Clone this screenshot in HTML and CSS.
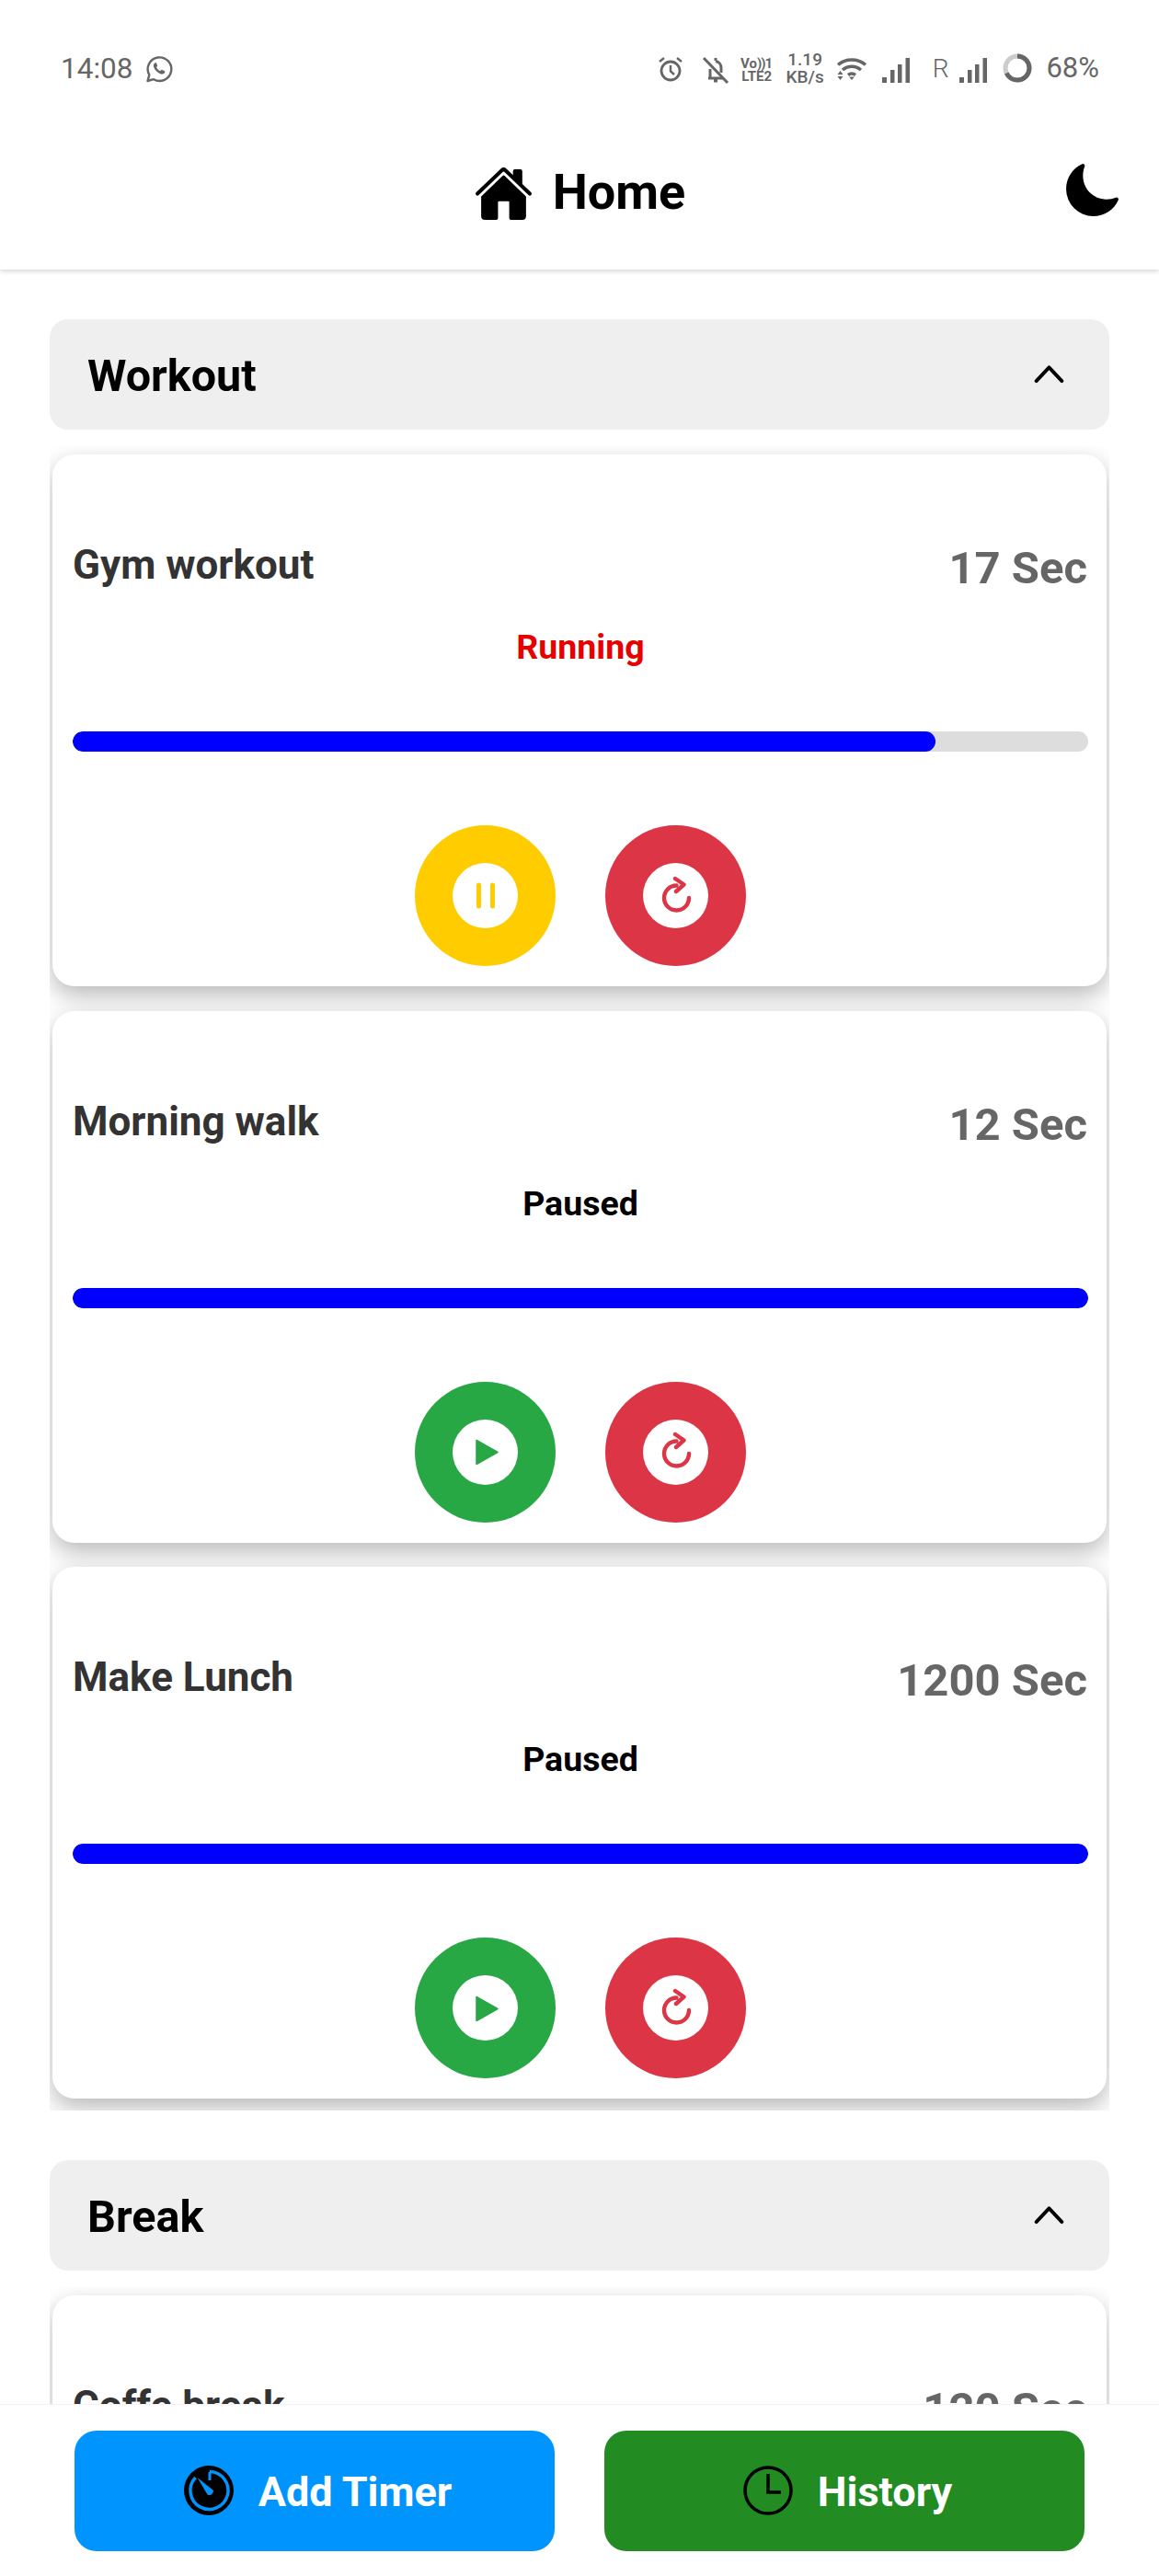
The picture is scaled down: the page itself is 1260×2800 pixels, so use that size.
FILE: index.html
```html
<!DOCTYPE html>
<html lang="en">

<head>
    <meta charset="UTF-8">
    <meta name="viewport" content="width=device-width, initial-scale=1.0">
    <title>Home</title>
    <link rel="stylesheet" href="styles.css">
</head>

<body>
    <svg class="defs" width="0" height="0">
        <symbol id="reload" viewBox="0 0 44 44">
            <path d="M36 24A13.5 13.5 0 1 1 22.5 10.5M21 3l9.5 6.5L22 17" fill="none" stroke="#dc3545" stroke-width="4.4" stroke-linecap="round" stroke-linejoin="round" />
        </symbol>
        <symbol id="chevron" viewBox="0 0 34 22">
            <path d="M2.5 19L17 3.5 31.5 19" fill="none" stroke="#000" stroke-width="4" stroke-linecap="round" stroke-linejoin="round" />
        </symbol>
        <symbol id="bars" viewBox="0 0 30 27">
            <rect x="0" y="21" width="5" height="6" />
            <rect x="9" y="13" width="4.5" height="14" />
            <rect x="17" y="7" width="4.5" height="20" />
            <rect x="25.500" y="0" width="4.5" height="27" />
        </symbol>
    </svg>

    <header class="top">
        <div class="status">
            <div class="status-left">
                <span class="clock">14:08</span>
                <svg class="wa" viewBox="0 0 30 30">
                    <path d="M2.5 28l1.8-6.6A12.8 12.8 0 1 1 9 26.2z" fill="none" stroke="#666" stroke-width="2.4" stroke-linejoin="round" />
                    <path d="M10.8 8.2c-1.6.8-2.3 2.6-1.7 4.6 1 3.3 4 6.3 7.6 7.6 2 .6 3.9-.3 4.5-2 .2-.6-.1-1-.6-1.300l-2.300-1.200c-.5-.2-.9-.1-1.200.3l-.9 1.100c-2-.9-3.300-2.200-4.200-4.200l.8-.9c.3-.4.4-.7.2-1.200l-1-2.400c-.2-.6-.7-.7-1.200-.4z" fill="#666" />
                </svg>
            </div>
            <div class="status-right">
                <svg class="ic-alarm" viewBox="0 0 28 28">
                    <circle cx="14" cy="16" r="10" fill="none" stroke="#666" stroke-width="2.800" />
                    <path d="M14 10v6.500l4 3.500M2 6l5-4M26 6l-5-4" fill="none" stroke="#666" stroke-width="2.400" />
                </svg>
                <svg class="ic-bell" viewBox="0 0 30 30">
                    <path d="M7 24h16M9 23v-9M21 18v-5c0-4-2.500-7-6-7.500M13 27h4M15 5V2" fill="none" stroke="#666" stroke-width="3" />
                    <path d="M2 2l26 27" stroke="#666" stroke-width="3" />
                </svg>
                <div class="net">
                    <span>Vo<i>))</i>1</span>
                    <span>LTE2</span>
                </div>
                <div class="speed">
                    <span>1.19</span>
                    <span>KB/s</span>
                </div>
                <svg class="ic-wifi" viewBox="0 0 32 26">
                    <path d="M1 8.500C9.500 1 22.500 1 31 8.500M6 14c6-5 14-5 20 0M12 19.500c2.500-1.800 5.500-1.800 8 0" fill="none" stroke="#666" stroke-width="3.500" />
                    <path d="M3.500 15l3 4h-6zM3.500 25l3-4h-6zM16 25l-3-3.500h6z" fill="#666" />
                </svg>
                <svg class="ic-bars"><use href="#bars" /></svg>
                <span class="roam">R</span>
                <svg class="ic-bars two"><use href="#bars" /></svg>
                <svg class="ic-ring" viewBox="0 0 32 32">
                    <circle cx="16" cy="16" r="13" fill="none" stroke="#ccc" stroke-width="5" />
                    <circle cx="16" cy="16" r="13" fill="none" stroke="#666" stroke-width="5" pathLength="100" stroke-dasharray="68 32" transform="rotate(-90 16 16)" />
                </svg>
                <span class="batt">68%</span>
            </div>
        </div>
        <div class="nav">
            <h1 class="title">
                <svg class="home-ic" viewBox="0 0 512 512">
                    <path d="M261.560 101.280a8 8 0 00-11.060 0L66.400 277.150a8 8 0 00-2.470 5.790L63.900 448a32 32 0 0032 32H192a16 16 0 0016-16V328a8 8 0 018-8h80a8 8 0 018 8v136a16 16 0 0016 16h96.060a32 32 0 0032-32V282.940a8 8 0 00-2.470-5.790z" />
                    <path d="M490.910 244.150l-74.800-71.560V64a16 16 0 00-16-16h-48a16 16 0 00-16 16v32l-57.920-55.380C272.770 35.140 264.710 32 256 32c-8.680 0-16.720 3.140-22.140 8.630l-212.700 203.500c-6.220 6-7 15.870-1.340 22.370A16 16 0 0043 267.560L250.500 69.280a8 8 0 0111.060 0l207.520 198.280a16 16 0 0022.590-.44c6.140-6.360 5.630-16.860-.76-22.970z" />
                </svg>
                Home
            </h1>
            <svg class="moon" viewBox="0 0 512 512">
                <path d="M264 480A232 232 0 0132 248c0-94 54-178.280 137.610-214.670a16 16 0 0121.060 21.060C181.070 76.430 176 104.660 176 136c0 110.280 89.720 200 200 200 31.340 0 59.570-5.070 81.610-14.670a16 16 0 0121.060 21.060C442.280 426 358 480 264 480z" />
            </svg>
        </div>
    </header>

    <main class="content">
        <section class="group">
            <div class="group-head">
                <h2>Workout</h2>
                <svg class="chevron"><use href="#chevron" /></svg>
            </div>
            <div class="group-body">
                <div class="card">
                    <div class="card-top">
                        <span class="name">Gym workout</span>
                        <span class="secs">17 Sec</span>
                    </div>
                    <p class="state running">Running</p>
                    <div class="track"><div class="fill" style="width: 85%"></div></div>
                    <div class="actions">
                        <div class="btn pause">
                            <span class="dot"><svg viewBox="0 0 44 44"><path d="M14.500 10v23M29.500 10v23" stroke="#ffcc00" stroke-width="5" stroke-linecap="round" /></svg></span>
                        </div>
                        <div class="btn reset">
                            <span class="dot"><svg><use href="#reload" /></svg></span>
                        </div>
                    </div>
                </div>
                <div class="card">
                    <div class="card-top">
                        <span class="name">Morning walk</span>
                        <span class="secs">12 Sec</span>
                    </div>
                    <p class="state">Paused</p>
                    <div class="track"><div class="fill" style="width: 100%"></div></div>
                    <div class="actions">
                        <div class="btn play">
                            <span class="dot"><svg viewBox="0 0 44 44"><path d="M12 9.500L35 22.500 12 35.500z" fill="#28a745" stroke="#28a745" stroke-width="1.500" stroke-linejoin="round" /></svg></span>
                        </div>
                        <div class="btn reset">
                            <span class="dot"><svg><use href="#reload" /></svg></span>
                        </div>
                    </div>
                </div>
                <div class="card">
                    <div class="card-top">
                        <span class="name">Make Lunch</span>
                        <span class="secs">1200 Sec</span>
                    </div>
                    <p class="state">Paused</p>
                    <div class="track"><div class="fill" style="width: 100%"></div></div>
                    <div class="actions">
                        <div class="btn play">
                            <span class="dot"><svg viewBox="0 0 44 44"><path d="M12 9.500L35 22.500 12 35.500z" fill="#28a745" stroke="#28a745" stroke-width="1.500" stroke-linejoin="round" /></svg></span>
                        </div>
                        <div class="btn reset">
                            <span class="dot"><svg><use href="#reload" /></svg></span>
                        </div>
                    </div>
                </div>
            </div>
        </section>

        <section class="group">
            <div class="group-head">
                <h2>Break</h2>
                <svg class="chevron"><use href="#chevron" /></svg>
            </div>
            <div class="group-body">
                <div class="card">
                    <div class="card-top">
                        <span class="name">Coffe break</span>
                        <span class="secs">120 Sec</span>
                    </div>
                </div>
            </div>
        </section>
    </main>

    <!-- stays over the list -->
    <footer class="bottom">
        <a class="big-btn blue">
            <svg viewBox="0 0 54 54">
                <circle cx="27" cy="27" r="27" />
                <path d="M28 6.500A20.500 20.500 0 1 1 12.500 13" fill="none" stroke="#0094ff" stroke-width="3.500" />
                <path d="M28 7v9" stroke="#0094ff" stroke-width="3" />
                <path d="M14.500 13L32 27a4.500 4.500 0 0 1-6.500 4.500z" fill="#0094ff" />
            </svg>
            Add Timer
        </a>
        <a class="big-btn green">
            <svg viewBox="0 0 54 54">
                <circle cx="27" cy="27" r="25" fill="none" stroke="#000" stroke-width="3.500" />
                <path d="M27 9v20h14" fill="none" stroke="#000" stroke-width="3.500" />
            </svg>
            History
        </a>
    </footer>
</body>

</html>
```

FILE: styles.css
```css
* {
    padding: 0;
    margin: 0;
    box-sizing: border-box;
}

html,
body {
    width: 100%;
    height: 2800px;
    background-color: #fff;
    font-family: Roboto, "Noto Sans", sans-serif;
    overflow: hidden;
}

body {
    position: relative;
}

.defs {
    position: absolute;
}

svg {
    display: block;
    flex-shrink: 0;
}

/* top bar */
.top {
    height: 293px;
    background-color: #fff;
    box-shadow: 0 2px 5px rgba(0, 0, 0, 0.16);
    position: relative;
    z-index: 1;
}

.status {
    height: 150px;
    padding: 59px 65px 0 66px;
    display: flex;
    justify-content: space-between;
    align-items: flex-start;
    color: #666;
}

.status-left,
.status-right {
    display: flex;
    align-items: center;
    height: 32px;
}

.status-right {
    margin-top: -1px;
}

.clock {
    font-size: 31.5px;
    line-height: 32px;
}

.wa {
    width: 30px;
    height: 30px;
    margin-left: 14px;
}

.ic-alarm {
    width: 28px;
    height: 28px;
    margin-top: 2px;
}

.ic-bell {
    width: 30px;
    height: 30px;
    margin-left: 20px;
    margin-top: 4px;
}

.net,
.speed {
    display: flex;
    flex-direction: column;
    align-items: center;
}

.net {
    margin-left: 12px;
    font-size: 15px;
    line-height: 14px;
    font-weight: 700;
    width: 36px;
    margin-top: 3px;
}

.net i {
    font-style: normal;
    letter-spacing: -1px;
}

.speed {
    margin-left: 16px;
    font-size: 19px;
    line-height: 19px;
    width: 37px;
    font-weight: 500;
}

.ic-wifi {
    width: 32px;
    height: 26px;
    margin-left: 16px;
    margin-top: 2px;
}

.ic-bars {
    width: 30px;
    height: 27px;
    margin-left: 17px;
    margin-top: 4px;
    fill: #666;
}

.ic-bars.two {
    margin-left: 12px;
}

.roam {
    font-size: 28px;
    line-height: 32px;
    font-weight: 300;
    margin-left: 25px;
    margin-top: 2px;
}

.ic-ring {
    width: 32px;
    height: 32px;
    margin-left: 17px;
}

.batt {
    font-size: 31px;
    line-height: 32px;
    margin-left: 15px;
}

.nav {
    height: 143px;
    display: flex;
    justify-content: center;
    align-items: center;
    position: relative;
    padding-bottom: 25px;
}

.title {
    display: flex;
    align-items: center;
    gap: 21px;
    font-size: 54px;
    line-height: 70px;
    font-weight: 700;
    color: #000;
}

.home-ic {
    width: 65px;
    height: 65px;
    margin-top: 2px;
}

.moon {
    width: 65px;
    height: 65px;
    position: absolute;
    right: 40px;
    top: 24px;
}

/* list */
.content {
    height: 2507px;
    padding: 54px 54px 0;
    overflow: hidden;
}

.group {
    margin-bottom: 54px;
}

.group-head {
    height: 120px;
    padding: 3px 49px 0 41px;
    background-color: #efefef;
    border-radius: 20px;
    display: flex;
    justify-content: space-between;
    align-items: center;
}

.group-head h2 {
    font-size: 48.5px;
    line-height: 60px;
    font-weight: 700;
    color: #000;
}

.chevron {
    width: 33px;
    height: 21px;
    margin-bottom: 5px;
}

.group-body {
    margin-top: 18px;
    padding: 9px 3px 13px;
    overflow: hidden;
}

.card {
    height: 578px;
    margin-bottom: 26.5px;
    padding: 90px 20px 0 22px;
    background-color: #fff;
    border-radius: 24px;
    box-shadow: 0 10px 26px rgba(0, 0, 0, 0.28);
}

.card:last-child {
    margin-bottom: 0;
}

.card-top {
    display: flex;
    justify-content: space-between;
    align-items: flex-start;
    height: 64px;
}

.name {
    font-size: 44px;
    line-height: 60px;
    font-weight: 700;
    color: #333;
}

.secs {
    font-size: 49px;
    line-height: 60px;
    font-weight: 700;
    color: #666;
    margin-top: 4px;
    margin-right: 1px;
}

.state {
    margin-top: 30px;
    font-size: 37.5px;
    line-height: 50px;
    font-weight: 700;
    color: #000;
    text-align: center;
}

.state.running {
    color: #e60000;
}

.track {
    margin-top: 67px;
    height: 22px;
    border-radius: 11px;
    background-color: #ddd;
    overflow: hidden;
}

.fill {
    height: 100%;
    background-color: #00f;
    border-radius: 11px;
}

.actions {
    margin-top: 80px;
    display: flex;
    justify-content: center;
    gap: 54px;
}

.btn {
    width: 153px;
    height: 153px;
    border-radius: 50%;
    display: flex;
    justify-content: center;
    align-items: center;
}

.btn.pause {
    background-color: #ffcc00;
}

.btn.play {
    background-color: #28a745;
}

.btn.reset {
    background-color: #dc3545;
}

.dot {
    width: 71px;
    height: 71px;
    border-radius: 50%;
    background-color: #fff;
    display: flex;
    justify-content: center;
    align-items: center;
}

.dot svg {
    width: 44px;
    height: 44px;
}

/* bottom buttons */
.bottom {
    position: absolute;
    left: 0;
    right: 0;
    bottom: 0;
    height: 187px;
    padding: 28px 81px 27px 81px;
    display: flex;
    gap: 54px;
    background-color: #fff;
    border-top: 1px solid #f2f2f2;
}

.big-btn {
    flex: 1;
    border-radius: 24px;
    display: flex;
    justify-content: center;
    align-items: center;
    gap: 27px;
    color: #fff;
    font-size: 45px;
    line-height: 56px;
    font-weight: 700;
    padding: 3px 0 0 7px;
}

.big-btn svg {
    width: 54px;
    height: 54px;
    margin-top: -4px;
}

.blue {
    background-color: #0094ff;
}

.green {
    background-color: #228b22;
}
```
